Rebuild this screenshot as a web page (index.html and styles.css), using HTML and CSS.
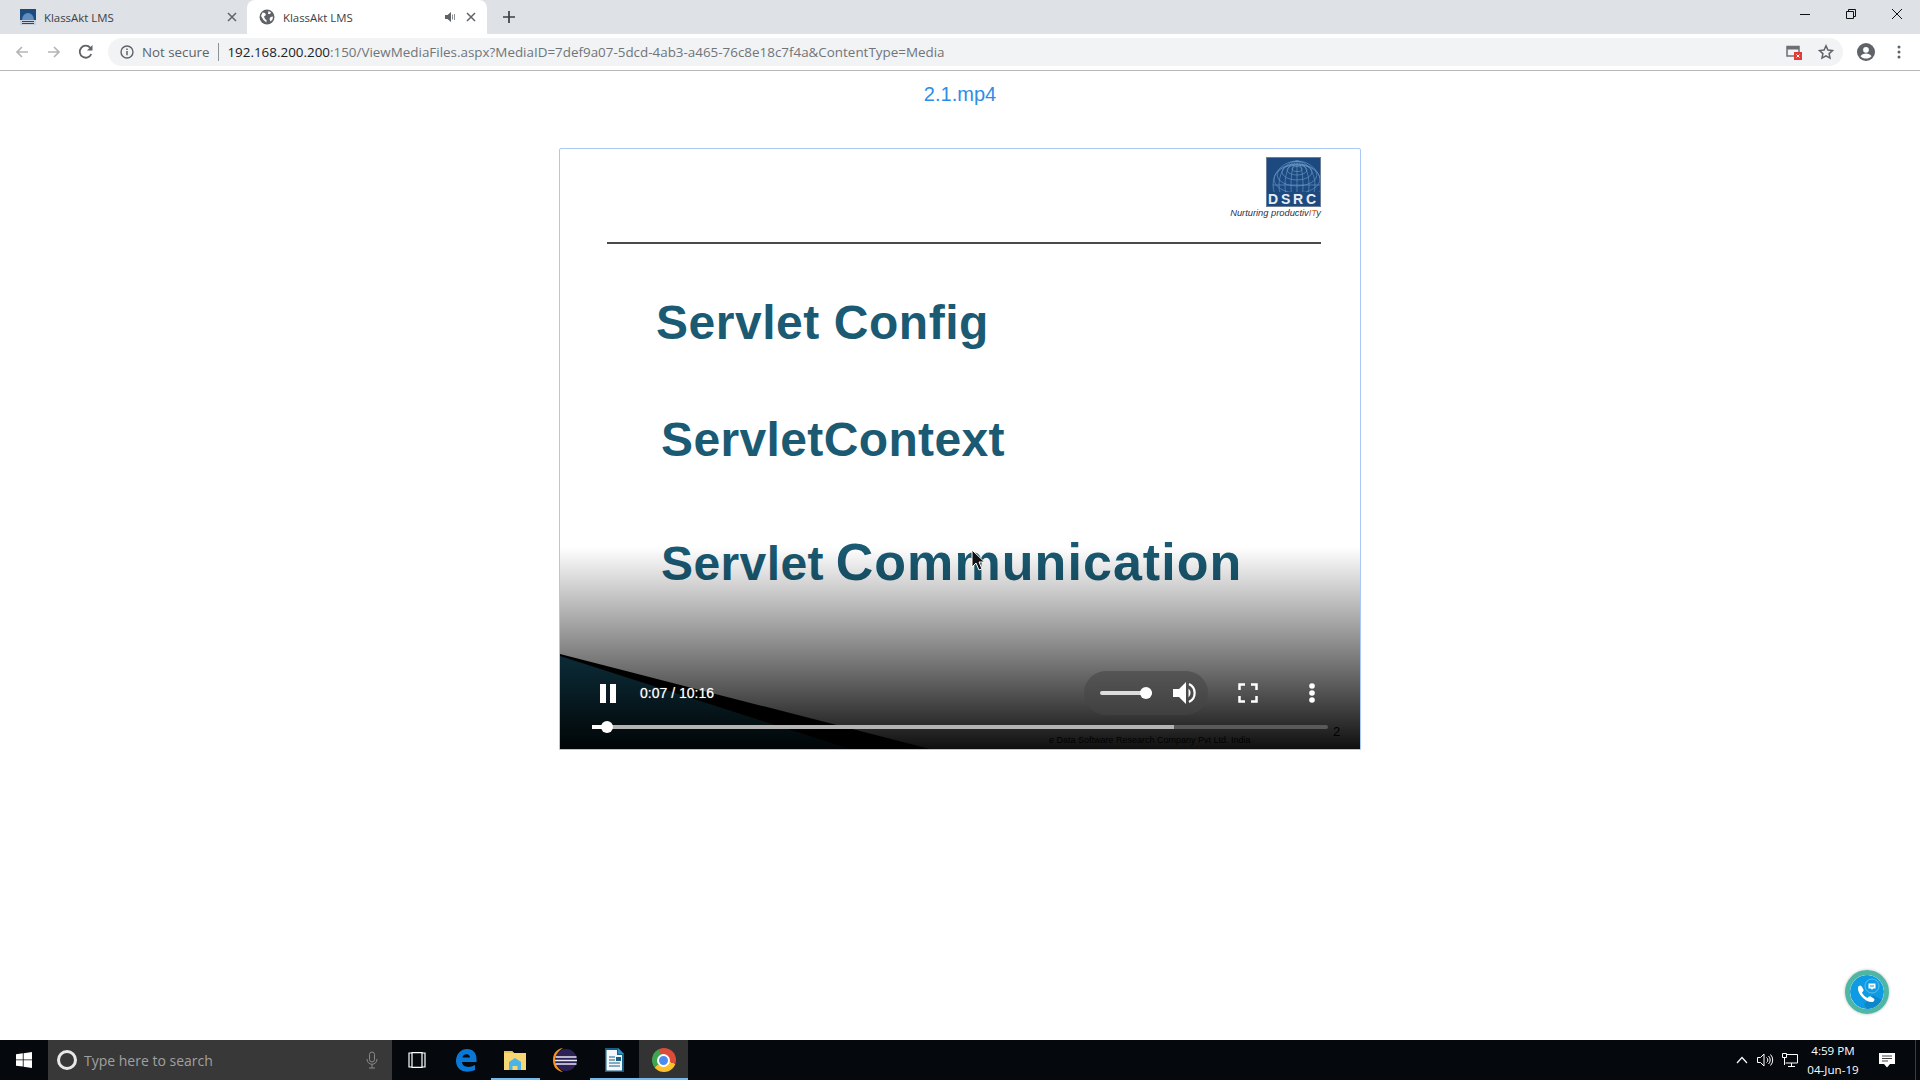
FILE: index.html
```html
<!DOCTYPE html>
<html>
<head>
<meta charset="utf-8">
<title>KlassAkt LMS</title>
<link rel="stylesheet" href="styles.css">
</head>
<body>

<div class="tabstrip">
	<div class="tab">
		<svg class="favicon" width="16" height="16" viewBox="0 0 16 16">
			<path d="M0 0h16v16H0z" fill="#1d4b7c"/>
			<path d="M2 11a6 7 0 0 1 12 0z" fill="#5f8fc0"/>
			<path d="M0 11h16v5H0z" fill="#c9d2dc"/>
			<path d="M2 12.500h12M2 14.500h12" stroke="#1d4b7c" stroke-width="1"/>
		</svg>
		<span class="tab-title">KlassAkt LMS</span>
		<svg class="tab-close" width="10" height="10" viewBox="0 0 10 10"><path d="M1 1l8 8M9 1l-8 8" stroke="#5f6368" stroke-width="1.5"/></svg>
	</div>
	<div class="tab active">
		<svg class="globe" width="16" height="16" viewBox="0 0 16 16"><circle cx="8" cy="8" r="7.500" fill="#5f6368"/><path d="M3.500 3.500l2.500.5 1 2-2 1.500 1 2.500 1.500 1v2.500L4.500 11 2 7zM9.500 2l2.500 1.500-1 1.500-2 0zM11.500 8l2.500-.5-.5 3-2 2-1-2.500z" fill="#fff"/></svg>
		<span class="tab-title">KlassAkt LMS</span>
		<svg class="tab-audio" width="12" height="12" viewBox="0 0 12 12"><path d="M0 4h2.500L6 1v10L2.500 8H0z" fill="#5f6368"/><path d="M7.500 3.500v5M9.500 3v6" stroke="#8d9093" stroke-width="1"/></svg>
		<svg class="tab-close" width="10" height="10" viewBox="0 0 10 10"><path d="M1 1l8 8M9 1l-8 8" stroke="#5f6368" stroke-width="1.5"/></svg>
	</div>
	<svg class="newtab" width="12" height="12" viewBox="0 0 12 12"><path d="M6 0v12M0 6h12" stroke="#3c4043" stroke-width="1.700"/></svg>
	<div class="winbtns">
		<svg width="12" height="12" viewBox="0 0 12 12"><path d="M1 6.500h10" stroke="#111" stroke-width="1"/></svg>
		<svg width="12" height="12" viewBox="0 0 12 12"><path d="M1.500 3.500h7v7h-7zM3.500 3.500v-2h7v7h-2" fill="none" stroke="#111" stroke-width="1"/></svg>
		<svg width="12" height="12" viewBox="0 0 12 12"><path d="M1 1l10 10M11 1L1 11" stroke="#111" stroke-width="1"/></svg>
	</div>
</div>

<div class="toolbar">
	<svg class="navicon" width="16" height="16" viewBox="0 0 16 16"><path d="M14 8H3M8 3L3 8l5 5" fill="none" stroke="#b3b5b8" stroke-width="1.700"/></svg>
	<svg class="navicon" width="16" height="16" viewBox="0 0 16 16"><path d="M2 8h11M8 3l5 5-5 5" fill="none" stroke="#b3b5b8" stroke-width="1.700"/></svg>
	<svg class="navicon" width="16" height="16" viewBox="0 0 16 16"><path d="M13.300 10A6 6 0 1 1 12.300 3.800" fill="none" stroke="#5f6368" stroke-width="1.800"/><path d="M14.500 1v5.500H9z" fill="#5f6368"/></svg>
	<div class="omnibox">
		<svg width="14" height="14" viewBox="0 0 14 14"><circle cx="7" cy="7" r="6" fill="none" stroke="#5f6368" stroke-width="1.400"/><path d="M7 6v4.200M7 3.500v1.400" stroke="#5f6368" stroke-width="1.500"/></svg>
		<span class="notsecure">Not secure</span>
		<span class="url"><span class="host">192.168.200.200</span>:150/ViewMediaFiles.aspx?MediaID=7def9a07-5dcd-4ab3-a465-76c8e18c7f4a&amp;ContentType=Media</span>
		<svg class="blocked" width="16" height="16" viewBox="0 0 16 16"><path d="M1 2.500h12v9.500H1z" fill="none" stroke="#6b6f73" stroke-width="1.500"/><path d="M1 2h12v3.500H1z" fill="#6b6f73"/><path d="M8 8h8v8H8z" fill="#e53935"/><path d="M10.500 10.500l3 3M13.500 10.500l-3 3" stroke="#fff" stroke-width="1"/></svg>
		<svg class="star" width="16" height="16" viewBox="0 0 16 16"><path d="M8 1.800l1.900 4.200 4.600.500-3.400 3.100.9 4.500L8 11.800l-4 2.300.9-4.500L1.500 6.500l4.600-.500z" fill="none" stroke="#5f6368" stroke-width="1.500"/></svg>
	</div>
	<svg class="profile" width="18" height="18" viewBox="0 0 18 18"><circle cx="9" cy="9" r="9" fill="#5f6368"/><circle cx="9" cy="6.800" r="2.900" fill="#fff"/><path d="M3.500 13.300c1-2 3.300-2.800 5.500-2.800s4.500.8 5.500 2.800c-1.400 1.500-3.300 2.300-5.500 2.300s-4.100-.8-5.500-2.300z" fill="#fff"/></svg>
	<svg class="menu" width="4" height="14" viewBox="0 0 4 14"><circle cx="2" cy="2" r="1.500" fill="#5f6368"/><circle cx="2" cy="7" r="1.500" fill="#5f6368"/><circle cx="2" cy="12" r="1.500" fill="#5f6368"/></svg>
</div>

<div class="content">
	<div class="media-title">2.1.mp4</div>
	<div class="video">
		<div class="slide">
			<div class="logo-row">
				<div class="logo">
					<div class="logo-box">
						<svg class="logo-globe" width="53" height="36" viewBox="0 0 53 36">
							<g fill="none" stroke="#6f9cc9" stroke-width=".6">
								<circle cx="30" cy="27" r="24"/>
								<ellipse cx="30" cy="27" rx="18" ry="24"/>
								<ellipse cx="30" cy="27" rx="12" ry="24"/>
								<ellipse cx="30" cy="27" rx="6" ry="24"/>
								<ellipse cx="30" cy="11" rx="5" ry="2.500"/>
								<ellipse cx="30" cy="12" rx="10" ry="5"/>
								<ellipse cx="30" cy="14" rx="15" ry="8"/>
								<ellipse cx="30" cy="17" rx="20" ry="11"/>
								<ellipse cx="30" cy="21" rx="23" ry="14"/>
								<path d="M30 3v33M6 27h48"/>
							</g>
						</svg>
						<div class="logo-name">DSRC</div>
					</div>
					<div class="logo-tag">Nurturing productiv<span class="logo-it">IT</span>y</div>
				</div>
			</div>
			<div class="slide-rule"></div>
			<div class="slide-line line1">Servlet Config</div>
			<div class="slide-line line2">ServletContext</div>
			<div class="slide-line line3">Servlet <span class="line3-big">Communication</span></div>
			<svg class="slide-corner" width="800" height="95" viewBox="0 0 800 95">
				<path d="M0 0L370 95H0z" fill="#000"/>
				<path d="M0 2L290 95H0z" fill="#17586f"/>
			</svg>
			<div class="slide-foot">e Data Software Research Company Pvt Ltd. India</div>
			<div class="slide-num">2</div>
		</div>
		<div class="video-shade"></div>
		<div class="controls">
			<div class="ctl-row">
				<svg class="pause" width="16" height="19" viewBox="0 0 16 19"><path d="M0 0h6v19H0zM10 0h6v19h-6z" fill="#fff"/></svg>
				<span class="time">0:07 / 10:16</span>
				<div class="volume">
					<div class="vol-track"><div class="vol-thumb"></div></div>
					<svg width="25" height="24" viewBox="0 0 25 24"><path d="M0 8h6l7-7v22l-7-7H0z" fill="#fff"/><path d="M15.500 7.500a6 6 0 0 1 0 9z" fill="#fff"/><path d="M16 3a10 10 0 0 1 0 18" fill="none" stroke="#fff" stroke-width="2.200"/></svg>
				</div>
				<svg class="fullscreen" width="20" height="20" viewBox="0 0 20 20"><path d="M1.500 7V1.500H7M13 1.500h5.500V7M18.500 13v5.500H13M7 18.500H1.500V13" fill="none" stroke="#fff" stroke-width="2.500"/></svg>
				<svg class="more" width="6" height="20" viewBox="0 0 6 20"><circle cx="3" cy="3" r="2.800" fill="#fff"/><circle cx="3" cy="10" r="2.800" fill="#fff"/><circle cx="3" cy="17" r="2.800" fill="#fff"/></svg>
			</div>
			<div class="seek">
				<div class="seek-buffer"></div>
				<div class="seek-played"></div>
				<div class="seek-thumb"></div>
			</div>
		</div>
		<svg class="cursor" width="14" height="22" viewBox="0 0 14 22"><path d="M1 1v17l4-4 3 7 3-1-3-7h5.500z" fill="#111" stroke="#fff" stroke-width="1"/></svg>
	</div>
	<div class="fab">
		<svg width="34" height="34" viewBox="0 0 34 34">
			<circle cx="17" cy="17" r="17" fill="#0f9be3"/>
			<path d="M17 34a17 17 0 0 0 15-9l-9-5-9 9z" fill="#0d86cc"/>
			<path d="M8 12c2-2 3-2 4 0l1.500 2.500c.5 1-.5 2-1.500 3 1 2.500 3 4.500 5.500 5.500 1-1 2-2 3-1.500L23 23c2 1 2 2 0 4-7 1-16-8-15-15z" fill="#fff"/>
			<circle cx="22" cy="11" r="7" fill="none" stroke="#7fcdf2" stroke-width=".7"/>
			<path d="M18.500 8.500h7v5h-2.500L22 15l-1-1.500h-2.500z" fill="#fff"/>
			<path d="M20 11h4" stroke="#0f9be3" stroke-width="1"/>
		</svg>
	</div>
</div>

<div class="taskbar">
	<div class="start">
		<svg width="16" height="16" viewBox="0 0 16 16"><path d="M0 2.300l6.800-1v6.200H0zM7.600 1.200L16 0v7.500H7.600zM0 8.300h6.800v6.300L0 13.700zM7.600 8.300H16V16l-8.400-1.200z" fill="#fff"/></svg>
	</div>
	<div class="search">
		<div class="cortana"></div>
		<span class="search-text">Type here to search</span>
		<svg class="mic" width="12" height="18" viewBox="0 0 12 18"><rect x="3.500" y="1" width="5" height="10" rx="2.500" fill="none" stroke="#8a8a8a"/><path d="M1 8c0 7 10 7 10 0M6 13v4M3 17h6" fill="none" stroke="#8a8a8a"/></svg>
	</div>
	<div class="taskitem">
		<svg width="20" height="16" viewBox="0 0 20 16"><path d="M5 1H2v14h3M15 1h3v14h-3M5 .7h10v14.600H5z" fill="none" stroke="#fff" stroke-width="1.200"/></svg>
	</div>
	<div class="taskitem">
		<svg width="22" height="24" viewBox="0 0 22 24"><path d="M1 12C2 5 6 1 12 1c6 0 9.500 4 9.500 10v3H7c.3 5 7 6.500 13 3v5c-9 4-19.500 1-19-10zm6.500-2.500h7.500C15 5 8 5 7.500 9.500z" fill="#0a78d6"/></svg>
	</div>
	<div class="taskitem running">
		<svg width="22" height="21" viewBox="0 0 22 21"><path d="M0 1h8l2 2h12v17H0z" fill="#f7d774"/><path d="M0 1h8l2 2H0z" fill="#e8c25a"/><path d="M5 12l6-4 6 4v8h-3.500v-4h-5v4H5z" fill="#4ab4e8"/></svg>
	</div>
	<div class="taskitem">
		<svg width="24" height="24" viewBox="0 0 24 24"><path d="M10 0C3 1 0 6 0 12s3 11 10 12C5 21 3 17 3 12S5 3 10 0z" fill="#f7941e"/><circle cx="13" cy="12" r="11" fill="#2c2255"/><path d="M2.500 9h21M2 12.500h22M2.500 16h21" stroke="#e8e8f2" stroke-width="1.400"/></svg>
	</div>
	<div class="taskitem running">
		<svg width="20" height="24" viewBox="0 0 20 24"><path d="M1 0h13l6 6v18H1z" fill="#155e86"/><path d="M2.500 2h10.500v5h5v15.500H2.500z" fill="#f4f7f9"/><path d="M14 0l6 6h-6z" fill="#2d8fc4"/><path d="M5 9h6M5 12h6M5 15h11M5 18h11" stroke="#155e86" stroke-width="1.200"/><path d="M12 9h5v4h-5z" fill="#155e86"/></svg>
	</div>
	<div class="taskitem running current">
		<div class="chrome"><div class="chrome-eye"></div></div>
	</div>
	<div class="tray">
		<svg width="12" height="8" viewBox="0 0 12 8"><path d="M1 7l5-5.500L11 7" fill="none" stroke="#fff" stroke-width="1.200"/></svg>
		<svg class="tray-sound" width="17" height="14" viewBox="0 0 17 14"><path d="M.5 4.500h3L7 1v12L3.500 9.500h-3z" fill="none" stroke="#fff"/><path d="M9.500 4.500a3 3 0 0 1 0 5M11.500 3a5.500 5.500 0 0 1 0 8M13.500 1.500a8 8 0 0 1 0 11" fill="none" stroke="#fff"/></svg>
		<svg class="tray-net" width="16" height="14" viewBox="0 0 16 14"><path d="M3.500 1.500h12v8.500H3.500M9.500 10v3M6 13.500h7" fill="none" stroke="#fff"/><path d="M.5 .5h4v4h-4zM2.500 4.500V12" fill="#000" stroke="#fff"/></svg>
		<div class="clock"><div>4:59 PM</div><div>04-Jun-19</div></div>
		<svg class="notif" width="16" height="15" viewBox="0 0 16 15"><path d="M0 0h16v11h-5l-3 3.500L5 11H0z" fill="#fff"/><path d="M3 3h10M3 5.500h10M3 8h6" stroke="#111" stroke-width=".8"/></svg>
	</div>
	<div class="desktop-peek"></div>
</div>

</body>
</html>
```

FILE: styles.css
```css
body{
	margin:0;
	height:1080px;
	display:flex;
	flex-direction:column;
	overflow:hidden;
	background:#fff;
	font-family:"Open Sans","Liberation Sans",sans-serif;
}

/* tabs */
.tabstrip{
	height:34px;
	background:#dee1e6;
	display:flex;
	align-items:center;
	flex-shrink:0;
}
.tab{
	width:247px;
	height:34px;
	box-sizing:border-box;
	display:flex;
	align-items:center;
	padding:0 10px 0 20px;
	font-size:11.400px;
	color:#3c4043;
}
.tab.active{
	width:240px;
	background:#fff;
	border-radius:8px 8px 0 0;
	padding:0 11px 0 12px;
}
.tab-title{
	margin-left:8px;
	flex:1;
	white-space:nowrap;
}
.tab-audio{
	margin-right:9px;
}
.newtab{
	margin-left:16px;
}
.winbtns{
	margin-left:auto;
	display:flex;
	gap:34px;
	padding:0 17px 6px 0;
}

/* address bar */
.toolbar{
	height:36px;
	background:#fff;
	border-bottom:1px solid #b8b8b8;
	display:flex;
	align-items:center;
	flex-shrink:0;
}
.navicon{
	margin-left:16px;
}
.navicon:first-child{
	margin-left:14px;
}
.omnibox{
	margin-left:14px;
	width:1735px;
	height:28px;
	box-sizing:border-box;
	background:#f1f3f4;
	border-radius:14px;
	display:flex;
	align-items:center;
	padding:0 9px 0 12px;
	font-size:13.300px;
}
.notsecure{
	margin-left:8px;
	padding-right:9px;
	border-right:1px solid #8f9295;
	color:#5f6368;
	line-height:18px;
}
.url{
	margin-left:8px;
	font-size:13.420px;
	color:#70757a;
	white-space:nowrap;
}
.host{
	color:#202124;
}
.blocked{
	margin-left:auto;
}
.star{
	margin-left:16px;
}
.profile{
	margin-left:14px;
}
.menu{
	margin-left:22px;
}

/* page */
.content{
	flex:1;
	position:relative;
	display:flex;
	flex-direction:column;
	align-items:center;
}
.media-title{
	margin-top:9px;
	height:28px;
	line-height:28px;
	font-family:"Liberation Sans",sans-serif;
	font-size:20px;
	color:#2e8de6;
}
.video{
	margin-top:40px;
	width:800px;
	height:600px;
	border:1px solid #a9c8f5;
	border-radius:2px 2px 0 0;
	position:relative;
	overflow:hidden;
	background:#fff;
}
.slide{
	height:100%;
	padding:8px 0 0 47px;
	box-sizing:border-box;
	font-family:"Liberation Sans",sans-serif;
}
.logo-row{
	width:714px;
	display:flex;
	justify-content:flex-end;
}
.logo{
	width:92px;
	display:flex;
	flex-direction:column;
	align-items:flex-end;
}
.logo-box{
	width:53px;
	height:48px;
	border:1px solid #6c7f96;
	background:#1c4a80;
	position:relative;
	overflow:hidden;
}
.logo-globe{
	display:block;
}
.logo-name{
	position:absolute;
	left:0;
	right:0;
	bottom:0;
	height:14px;
	line-height:14px;
	background:#1c4a80;
	color:#e9edf2;
	font-weight:bold;
	font-size:14px;
	letter-spacing:2.800px;
	text-align:center;
	white-space:nowrap;
}
.logo-tag{
	font-size:9.300px;
	font-style:italic;
	line-height:12px;
	color:#28324a;
	white-space:nowrap;
}
.logo-it{
	color:#c8642a;
}
.slide-rule{
	width:714px;
	height:2px;
	margin-top:23px;
	background:#4a4a4a;
}
.slide-line{
	font-weight:bold;
	font-size:48px;
	line-height:56px;
	color:#1a5a72;
	white-space:nowrap;
}
.line1{
	margin:51px 0 0 49px;
	letter-spacing:.54px;
}
.line2{
	margin:61px 0 0 54px;
	letter-spacing:.37px;
}
.line3{
	margin:66px 0 0 54px;
	letter-spacing:.4px;
	word-spacing:-2px;
}
.line3-big{
	font-size:52px;
	letter-spacing:1.070px;
}
.slide-corner{
	position:absolute;
	left:0;
	bottom:0;
}
.slide-foot{
	position:absolute;
	left:489px;
	bottom:4px;
	font-size:9px;
	color:#000;
	white-space:nowrap;
}
.slide-num{
	position:absolute;
	left:773px;
	bottom:10px;
	font-size:13px;
	color:#000;
}
.video-shade{
	position:absolute;
	left:0;
	right:0;
	bottom:0;
	height:202px;
	background:linear-gradient(rgba(0,0,0,0),rgba(0,0,0,.94));
}

/* player controls */
.controls{
	position:absolute;
	left:0;
	right:0;
	bottom:0;
	height:78px;
	box-sizing:border-box;
	padding:0 32px 0 32px;
	font-family:"Liberation Sans",sans-serif;
}
.ctl-row{
	height:44px;
	display:flex;
	align-items:center;
	color:#fff;
}
.pause{
	margin-left:8px;
}
.time{
	margin-left:24px;
	font-size:14px;
	color:#fff;
	text-shadow:0 0 1px rgba(255,255,255,.6);
}
.volume{
	margin-left:auto;
	width:124px;
	height:44px;
	box-sizing:border-box;
	padding:0 10px 0 16px;
	border-radius:22px;
	background:rgba(70,70,70,.6);
	display:flex;
	align-items:center;
	justify-content:space-between;
}
.vol-track{
	width:52px;
	height:4px;
	background:#ddd;
	border-radius:2px;
	position:relative;
}
.vol-thumb{
	position:absolute;
	right:0;
	top:-4px;
	width:12px;
	height:12px;
	border-radius:50%;
	background:#fff;
}
.fullscreen{
	margin-left:30px;
}
.more{
	margin-left:51px;
	margin-right:13px;
}
.seek{
	margin-top:10px;
	height:4px;
	border-radius:2px;
	background:#595959;
	position:relative;
	width:736px;
}
.seek-buffer{
	position:absolute;
	left:0;
	top:0;
	bottom:0;
	width:582px;
	background:#b4b4b4;
	border-radius:2px 0 0 2px;
}
.seek-played{
	position:absolute;
	left:0;
	top:0;
	bottom:0;
	width:15px;
	background:#fff;
}
.seek-thumb{
	position:absolute;
	left:9px;
	top:-4px;
	width:12px;
	height:12px;
	border-radius:50%;
	background:#fff;
}
.cursor{
	position:absolute;
	left:411px;
	top:400px;
}
.fab{
	position:absolute;
	left:1845px;
	top:899px;
	width:34px;
	height:34px;
	border:5px solid #4db6a4;
	border-radius:50%;
	overflow:hidden;
	box-shadow:0 0 3px rgba(0,0,0,.3);
}
.fab svg{
	display:block;
}

/* windows taskbar */
.taskbar{
	height:40px;
	flex-shrink:0;
	background:#05080c;
	display:flex;
	align-items:stretch;
	font-family:"Open Sans","Liberation Sans",sans-serif;
}
.start{
	width:48px;
	display:flex;
	align-items:center;
	justify-content:center;
}
.search{
	width:344px;
	box-sizing:border-box;
	padding:0 14px 0 9px;
	background:#383838;
	display:flex;
	align-items:center;
}
.cortana{
	width:14px;
	height:14px;
	border:3px solid #e8e8e8;
	border-radius:50%;
}
.search-text{
	margin-left:7px;
	font-size:14px;
	color:#a0a0a0;
}
.mic{
	margin-left:auto;
}
.taskitem{
	width:49.400px;
	display:flex;
	align-items:center;
	justify-content:center;
	box-sizing:border-box;
}
.taskitem.running{
	border-bottom:2px solid #76b9ed;
	padding-top:2px;
}
.taskitem.current{
	background:#333;
}
.chrome{
	width:24px;
	height:24px;
	border-radius:50%;
	background:conic-gradient(#dd4b39 0 110deg,#fbc02d 110deg 230deg,#3fa650 230deg 330deg,#dd4b39 330deg);
	display:flex;
	align-items:center;
	justify-content:center;
}
.chrome-eye{
	width:9px;
	height:9px;
	border:2px solid #fff;
	border-radius:50%;
	background:#4b8bf0;
}
.tray{
	margin-left:auto;
	display:flex;
	align-items:center;
	color:#fff;
}
.tray-sound{
	margin-left:9px;
}
.tray-net{
	margin-left:8px;
}
.clock{
	margin-left:2px;
	width:66px;
	text-align:center;
	font-size:11.600px;
	line-height:19px;
}
.notif{
	margin:0 20px 0 13px;
}
.desktop-peek{
	width:5px;
	border-left:1px solid #3a3d40;
	box-sizing:border-box;
}
```
